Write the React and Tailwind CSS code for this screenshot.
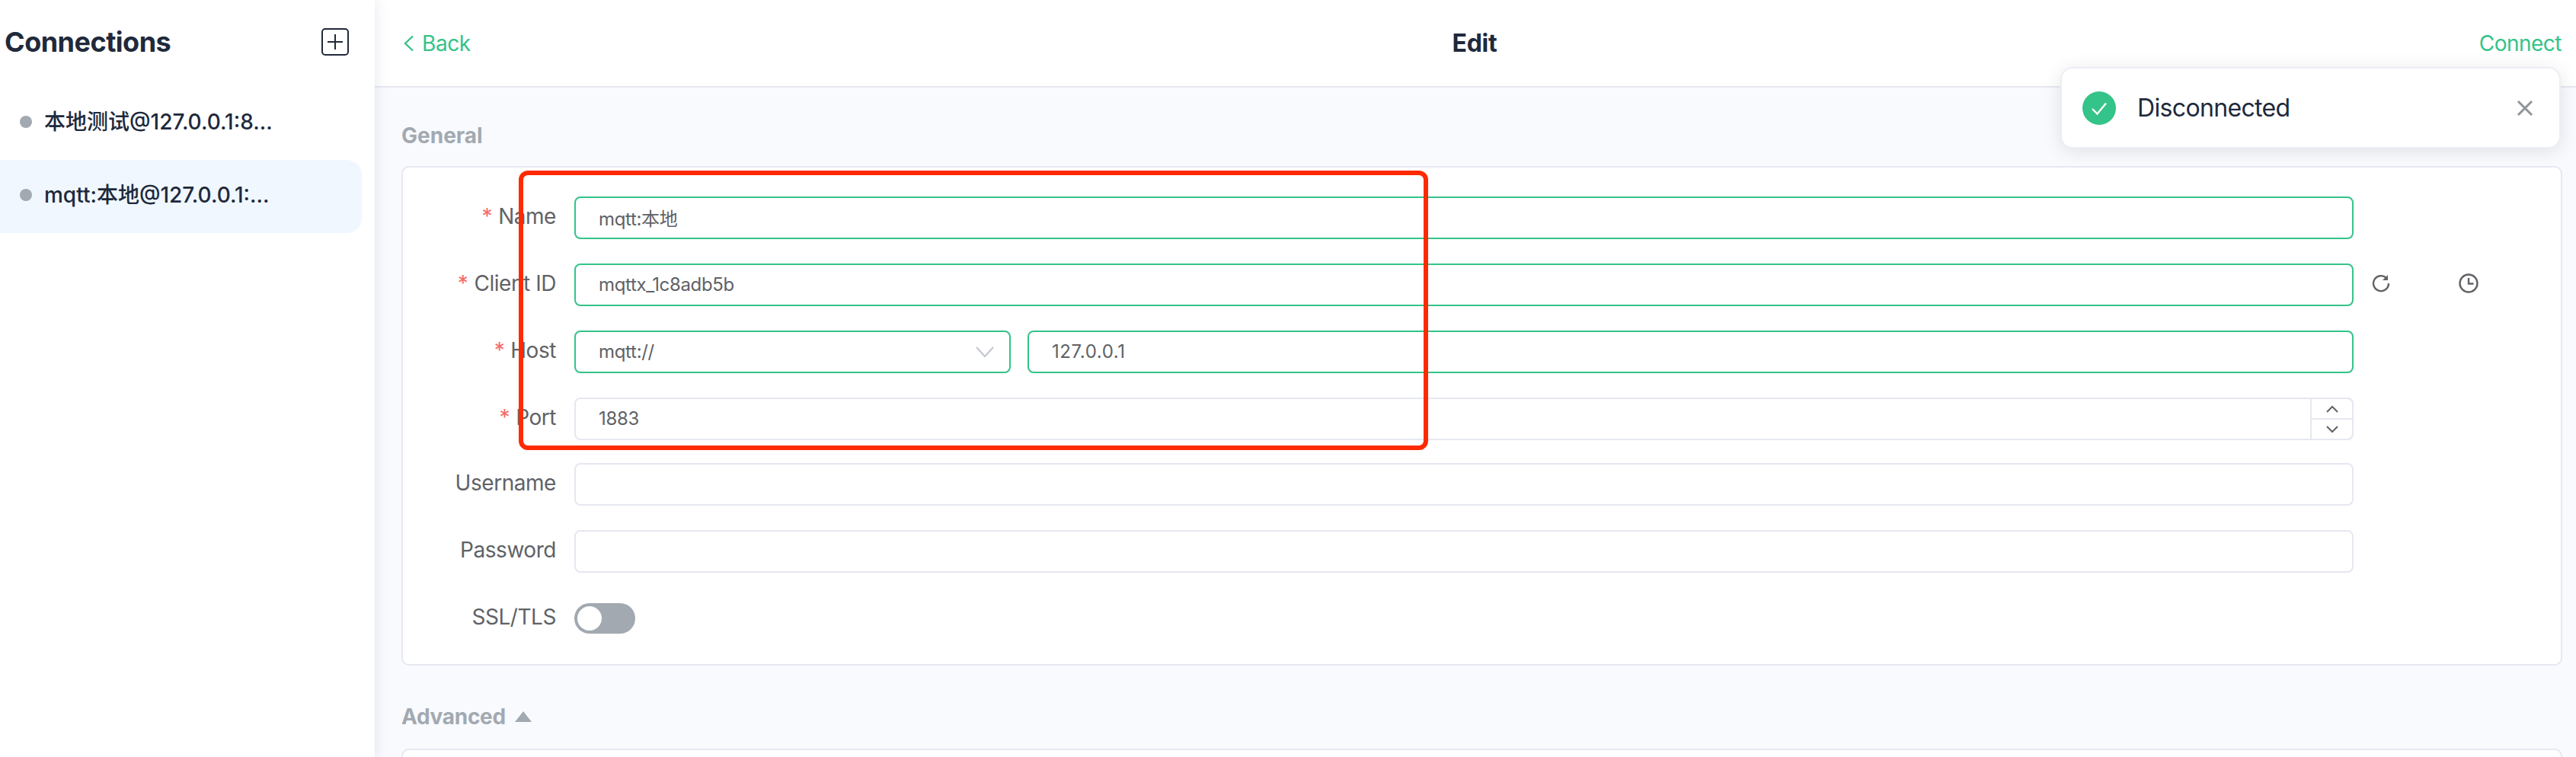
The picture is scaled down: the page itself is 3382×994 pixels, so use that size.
import React from "react";

const FONT = "font-['Inter','Noto_Sans_CJK_SC',sans-serif]";

function Field({ label, required, children, after, className = "" }) {
  return (
    <div className={`flex items-center h-[56px] ${className}`}>
      <label className="w-[201px] shrink-0 pb-[3px] text-right text-[28px] leading-[53px] tracking-[-0.45px] text-[#606266]">
        {required && <span className="text-[#f56c6c] mr-[8px]">*</span>}
        {label}
      </label>
      <div className="w-[2336px] ml-[24px] shrink-0 h-full flex gap-[22px]">{children}</div>
      {after}
    </div>
  );
}

function TextBox({ value, active, tracking = "tracking-[-0.35px]" }) {
  return (
    <input
      readOnly
      value={value}
      className={`h-[56px] w-full rounded-[8px] border-2 bg-white px-[30px] pb-[1px] text-[24px] text-[#606266] outline-none ${tracking} ${
        active ? "border-[#34c388]" : "border-[#e6e8f1]"
      }`}
    />
  );
}

function Item({ text, active }) {
  return (
    <div
      className={`flex h-[96px] w-[475px] items-center rounded-r-[20px] pb-[4px] ${active ? "bg-[#f0f7ff]" : ""}`}
    >
      <span className="ml-[26px] h-[16px] w-[16px] rounded-full bg-[#a2a9b0]" />
      <span className="ml-[16px] text-[28px] font-medium text-[#20293b] whitespace-nowrap">{text}</span>
    </div>
  );
}

export default function App() {
  return (
    <div className={`${FONT} relative flex h-[994px] w-[3382px] overflow-hidden bg-[#f9fafe]`}>
      <aside className="relative z-10 w-[492px] shrink-0 bg-white shadow-[0_0_16px_rgba(160,170,195,0.3)]">
        <div className="flex h-[110px] items-center justify-between pl-[6px] pr-[34px]">
          <h1 className="text-[36px] font-bold tracking-[-0.5px] text-[#20293b]">Connections</h1>
          <svg width="36" height="36" viewBox="0 0 36 36" fill="none" stroke="#20293b" strokeWidth="2">
            <rect x="1" y="1" width="34" height="34" rx="4" />
            <path d="M18 8v20M8 18h20" />
          </svg>
        </div>
        <div className="mt-[4px]">
          <Item text="本地测试@127.0.0.1:8..." />
          <Item text="mqtt:本地@127.0.0.1:..." active />
        </div>
      </aside>

      <main className="flex min-w-0 flex-1 flex-col">
        <header className="relative flex h-[115px] shrink-0 items-center justify-between border-b-2 border-[#e6e8f1] bg-white pl-[38px] pr-[19px]">
          <div className="flex items-center gap-[10px] text-[28px] tracking-[-0.4px] text-[#34c388]">
            <svg className="-ml-[1px]" width="15" height="22" viewBox="0 0 15 22" fill="none" stroke="#34c388" strokeWidth="2.4">
              <path d="M13 1.5 3 11l10 9.5" />
            </svg>
            Back
          </div>
          <div className="absolute left-[1444px] -translate-x-1/2 text-[32px] font-bold tracking-[-0.3px] text-[#20293b]">Edit</div>
          <div className="text-[28px] tracking-[-0.5px] text-[#34c388]">Connect</div>
        </header>

        <div className="pl-[35px] pr-[18px]">
          <div className="flex h-[103px] items-start pt-[44px] text-[28px] font-bold leading-[38px] text-[#a2a9b0]">General</div>
          <section className="h-[656px] rounded-[10px] border-2 border-[#e6e8f1] bg-white pt-[38px]">
            <div className="flex flex-col gap-[32px]">
              <Field label="Name" required>
                <TextBox value="mqtt:本地" active />
              </Field>
              <Field
                label="Client ID"
                required
                after={
                  <div className="flex items-center pb-[4px]">
                    <svg className="ml-[24px]" width="24" height="24" viewBox="0 0 24 24" fill="none" stroke="#606266" strokeWidth="2.4">
                      <path d="M19 5A10 10 0 1 0 22 12" />
                      <path d="M21 1v7h-7z" fill="#606266" stroke="none" />
                    </svg>
                    <svg className="ml-[90px]" width="26" height="26" viewBox="0 0 26 26" fill="none" stroke="#606266" strokeWidth="2.4">
                      <circle cx="13" cy="13" r="11.5" />
                      <path d="M13 6v7.5h6.5" />
                    </svg>
                  </div>
                }
              >
                <TextBox value="mqttx_1c8adb5b" active />
              </Field>
              <Field label="Host" required>
                <div className="flex h-[56px] w-[573px] shrink-0 items-center justify-between rounded-[8px] border-2 border-[#34c388] bg-white pb-[1px] pl-[30px] pr-[20px] text-[24px] tracking-[-0.3px] text-[#606266]">
                  mqtt://
                  <svg width="24" height="14" viewBox="0 0 24 14" fill="none" stroke="#c0c4cc" strokeWidth="2">
                    <path d="M1 1l11 12L23 1" />
                  </svg>
                </div>
                <TextBox value="127.0.0.1" active tracking="tracking-[0.6px]" />
              </Field>
              <Field label="Port" required>
                <div className="relative h-[56px] w-full">
                  <TextBox value="1883" />
                  <div className="absolute right-0 top-0 flex h-[56px] w-[57px] flex-col divide-y-2 divide-[#e6e8f1] rounded-r-[8px] border-2 border-[#e6e8f1]">
                    <div className="flex flex-1 items-center justify-center">
                      <svg width="16" height="10" viewBox="0 0 16 10" fill="none" stroke="#606266" strokeWidth="2">
                        <path d="M1 9l7-7 7 7" />
                      </svg>
                    </div>
                    <div className="flex flex-1 items-center justify-center">
                      <svg width="16" height="10" viewBox="0 0 16 10" fill="none" stroke="#606266" strokeWidth="2">
                        <path d="M1 1l7 7 7-7" />
                      </svg>
                    </div>
                  </div>
                </div>
              </Field>
              <Field label="Username" className="-mt-[2px]">
                <TextBox value="" />
              </Field>
              <Field label="Password">
                <TextBox value="" />
              </Field>
            </div>
            <div className="mt-[32px] flex h-[56px] items-center">
              <label className="w-[201px] pb-[4px] text-right text-[28px] tracking-[-0.45px] text-[#606266]">SSL/TLS</label>
              <div className="ml-[24px] flex h-[40px] w-[80px] items-center rounded-full bg-[#a2a9b0] pl-[4px]">
                <span className="h-[32px] w-[32px] rounded-full bg-white" />
              </div>
            </div>
          </section>
          <div className="flex h-[109px] items-center gap-[12px] pt-[26px] pb-[2px] text-[28px] font-bold tracking-[-0.3px] text-[#a2a9b0]">
            Advanced
            <svg width="22" height="14" viewBox="0 0 22 14" fill="#a2a9b0">
              <path d="M11 0l11 14H0z" />
            </svg>
          </div>
          <section className="h-[100px] rounded-[10px] border-2 border-[#e6e8f1] bg-white" />
        </div>
      </main>

      <div className="absolute left-[2705px] top-[88px] z-20 flex h-[107px] w-[657px] items-center rounded-[16px] border-2 border-[#ebeef5] bg-white pt-[1px] shadow-[0_4px_24px_rgba(0,0,0,0.1)]">
        <svg className="ml-[27px]" width="44" height="44" viewBox="0 0 44 44">
          <circle cx="22" cy="22" r="22" fill="#34c388" />
          <path d="M13 23l6.5 6.5L31 15.5" fill="none" stroke="#fff" strokeWidth="2.4" />
        </svg>
        <span className="ml-[28px] text-[32px] tracking-[-0.65px] text-[#20293b]">Disconnected</span>
        <svg className="ml-auto mr-[34px]" width="22" height="22" viewBox="0 0 22 22" fill="none" stroke="#909399" strokeWidth="3">
          <path d="M2 2l18 18M20 2 2 20" />
        </svg>
      </div>

      <div className="pointer-events-none absolute left-[681px] top-[224px] z-20 h-[367px] w-[1194px] rounded-[12px] border-[6px] border-[#ff2a00]" />
    </div>
  );
}
